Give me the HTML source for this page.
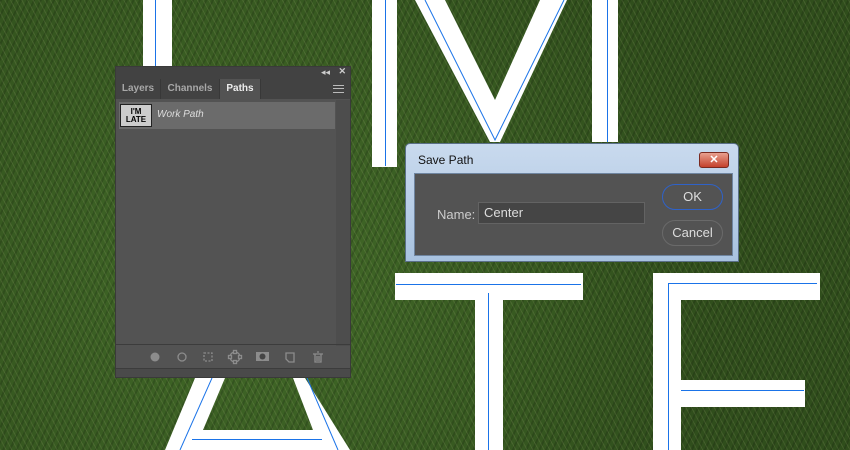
<!DOCTYPE html>
<html><head><meta charset="utf-8"><style>
*{margin:0;padding:0;box-sizing:border-box}
body{width:850px;height:450px;overflow:hidden;position:relative;font-family:"Liberation Sans",sans-serif;
background:
repeating-linear-gradient(62deg,rgba(200,200,150,.13) 0 1px,transparent 1px 5px),
repeating-linear-gradient(115deg,rgba(0,0,0,.15) 0 2px,transparent 2px 6px),
radial-gradient(circle at 30% 60%,#426a28,#304e1c 70%),#36561f;}
svg.bg{position:absolute;left:0;top:0}
.panel{position:absolute;left:115px;top:66px;width:236px;height:312px;background:#535353;border:1px solid #3a3a3a}
.hdr{height:12px;background:#424242;position:relative;color:#ccc;font-size:9px}
.tabs{height:20px;background:#424242;position:relative;font-size:10px;color:#a8a8a8;font-weight:bold}
.tab{position:absolute;top:0;height:20px;line-height:20px;text-align:center;border-right:1px solid #383838}
.row{position:absolute;left:3px;top:35px;width:216px;height:27px;background:#6b6b6b}
.thumb{position:absolute;left:1px;top:2px;width:32px;height:23px;background:#ccc;border:1px solid #222;font-size:8px;line-height:8px;text-align:center;color:#000;font-weight:bold;padding-top:3px}
.foot{position:absolute;left:0;bottom:8px;width:100%;height:25px;border-top:1px solid #3c3c3c;border-bottom:1px solid #3c3c3c}
.grip{position:absolute;left:0;bottom:0;width:100%;height:8px;background:#4a4a4a}
.dlg{position:absolute;left:405px;top:143px;width:334px;height:119px;background:linear-gradient(#c9daee,#a8c2df);border:1px solid #5a6f88;border-radius:5px 5px 0 0}
.in{position:absolute;left:8px;top:29px;width:319px;height:83px;background:#535353;border:1px solid #6f85a0}
.btn{position:absolute;left:247px;width:61px;height:26px;border-radius:13px;border:1.5px solid #6a6a6a;color:#ddd;font-size:13px;text-align:center;line-height:23px}
</style></head><body>
<svg class="bg" width="850" height="450">
<g fill="#fff">
<rect x="143" y="0" width="29" height="66"/>
<rect x="372" y="0" width="25" height="167"/>
<polygon points="415,0 445,0 495,100 540,0 567,0 500,142 490,142"/>
<rect x="592" y="0" width="26" height="142"/>
<rect x="395" y="273" width="188" height="27"/>
<rect x="475" y="300" width="28" height="150"/>
<rect x="653" y="273" width="167" height="27"/>
<rect x="653" y="273" width="28" height="177"/>
<rect x="681" y="380" width="124" height="27"/>
<polygon points="195,378 225,378 203,430 313,430 293,378 305,378 350,450 165,450"/>
</g>
<g stroke="#1a73e8" stroke-width="1" fill="none">
<line x1="155.5" y1="0" x2="155.5" y2="66"/>
<line x1="385.5" y1="0" x2="385.5" y2="166"/>
<polyline points="425,0 495,140 564,0"/>
<line x1="607.5" y1="0" x2="607.5" y2="142"/>
<line x1="396" y1="284.5" x2="581" y2="284.5"/>
<line x1="488.5" y1="293" x2="488.5" y2="450"/>
<polyline points="668.5,450 668.5,283.5 817,283.5"/>
<line x1="681" y1="390.5" x2="804" y2="390.5"/>
<line x1="212" y1="378" x2="180" y2="450"/>
<line x1="307" y1="378" x2="338" y2="450"/>
<line x1="192" y1="439.5" x2="322" y2="439.5"/>
</g>
</svg>

<div class="panel">
<div class="hdr"><span style="position:absolute;right:20px;top:0">◂◂</span><span style="position:absolute;right:4px;top:-1px;font-weight:bold">✕</span></div>
<div class="tabs">
<div class="tab" style="left:0;width:45px">Layers</div>
<div class="tab" style="left:45px;width:59px">Channels</div>
<div class="tab" style="left:104px;width:41px;background:#535353;color:#eee">Paths</div>
<div style="position:absolute;right:6px;top:6px;width:11px;height:8px;border-top:1px solid #bbb;border-bottom:1px solid #bbb"><div style="margin-top:2px;border-top:1px solid #bbb"></div></div>
</div>
<div class="row"><div class="thumb">I'M<br>LATE</div><span style="position:absolute;left:38px;top:7px;font-size:10px;font-style:italic;color:#ddd">Work Path</span></div>
<div style="position:absolute;right:0;top:33px;width:14px;height:246px;background:#4d4d4d"></div>
<div class="foot">
<svg width="236" height="24" style="position:absolute;top:0;left:0" fill="none" stroke="#8c8c8c" stroke-width="1.3">
<circle cx="39" cy="12" r="4.5" fill="#8c8c8c" stroke="none"/>
<circle cx="66" cy="12" r="4"/>
<rect x="88" y="8" width="8" height="8" stroke-dasharray="2 1.5"/>
<circle cx="119" cy="12" r="5"/><rect x="117.5" y="5.5" width="3" height="3" fill="#535353"/><rect x="117.5" y="15.5" width="3" height="3" fill="#535353"/><rect x="112.5" y="10.5" width="3" height="3" fill="#535353"/><rect x="122.5" y="10.5" width="3" height="3" fill="#535353"/>
<rect x="140" y="7" width="13" height="9" fill="#8c8c8c" stroke="none"/><circle cx="146.5" cy="11.5" r="3" fill="#444" stroke="none"/>
<path d="M170 8h8v9h-5l-3-3z"/>
<path d="M197 9h10M199 9v8h6v-8M201 7h2M201 11v5M203 11v5"/>
</svg>
</div>
<div class="grip"></div>
</div>

<div class="dlg">
<div style="position:absolute;left:12px;top:9px;font-size:12px;color:#111">Save Path</div>
<div style="position:absolute;left:293px;top:8px;width:30px;height:16px;border-radius:3px;background:linear-gradient(#e8a08f,#c4412c);border:1px solid #7a2a20;color:#fff;font-size:11px;font-weight:bold;text-align:center;line-height:14px">✕</div>
<div class="in">
<div style="position:absolute;left:22px;top:33px;font-size:13px;color:#ccc">Name:</div>
<div style="position:absolute;left:63px;top:28px;width:167px;height:22px;background:#454545;border:1px solid #636363;color:#ddd;font-size:13px;line-height:20px;padding-left:5px">Center</div>
<div class="btn" style="top:10px;border-color:#2f62c8">OK</div>
<div class="btn" style="top:46px">Cancel</div>
</div>
</div>
</body></html>
